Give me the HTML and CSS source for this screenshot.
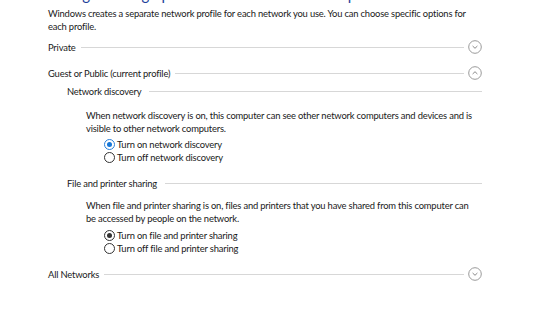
FILE: index.html
```html
<!DOCTYPE html>
<html lang="en">
<head>
    <meta charset="UTF-8">
    <title>Advanced sharing settings</title>
    <link rel="stylesheet" href="styles.css">
</head>
<body>
    <div class="page">
        <div class="page-title">Change sharing options for different network profiles</div>
        <p class="intro">Windows creates a separate network profile for each network you use. You can choose specific options for each profile.</p>

        <div class="profile-row row-private">
            <span class="profile-name">Private</span>
            <span class="rule"></span>
            <span class="expander down">
                <svg width="14" height="14" viewBox="0 0 14 14"><circle cx="7" cy="7" r="6.3" fill="none" stroke="#9a9a9a" stroke-width="1"/><path d="M4.6 6 L7 8.3 L9.4 6" fill="none" stroke="#8a8a8a" stroke-width="1"/></svg>
            </span>
        </div>

        <div class="profile-row row-guest">
            <span class="profile-name">Guest or Public (current profile)</span>
            <span class="rule"></span>
            <span class="expander up">
                <svg width="14" height="14" viewBox="0 0 14 14"><circle cx="7" cy="7" r="6.3" fill="none" stroke="#9a9a9a" stroke-width="1"/><path d="M4.6 8 L7 5.7 L9.4 8" fill="none" stroke="#8a8a8a" stroke-width="1"/></svg>
            </span>
        </div>

        <div class="section">
            <div class="section-head">
                <span>Network discovery</span>
                <span class="rule"></span>
            </div>
            <p class="section-text">When network discovery is on, this computer can see other network computers and devices and is visible to other network computers.</p>
            <div class="options">
                <label class="option"><span class="radio focused checked"></span>Turn on network discovery</label>
                <label class="option"><span class="radio"></span>Turn off network discovery</label>
            </div>
        </div>

        <div class="section section-sharing">
            <div class="section-head">
                <span>File and printer sharing</span>
                <span class="rule"></span>
            </div>
            <p class="section-text">When file and printer sharing is on, files and printers that you have shared from this computer can be accessed by people on the network.</p>
            <div class="options options-sharing">
                <label class="option"><span class="radio checked"></span>Turn on file and printer sharing</label>
                <label class="option"><span class="radio"></span>Turn off file and printer sharing</label>
            </div>
        </div>

        <div class="profile-row row-all">
            <span class="profile-name">All Networks</span>
            <span class="rule"></span>
            <span class="expander down">
                <svg width="14" height="14" viewBox="0 0 14 14"><circle cx="7" cy="7" r="6.3" fill="none" stroke="#9a9a9a" stroke-width="1"/><path d="M4.6 6 L7 8.3 L9.4 6" fill="none" stroke="#8a8a8a" stroke-width="1"/></svg>
            </span>
        </div>
    </div>
</body>
</html>
```

FILE: styles.css
```css
body {
    margin: 0;
    background-color: #fff;
    font-family: Lato, "Noto Sans", sans-serif;
    font-size: 9.4px;
    letter-spacing: -0.18px;
    line-height: 13px;
    color: #1a1a1a;
    overflow: hidden;
}
.page {
    width: 434px;
    padding-left: 48px;
}
.page-title {
    height: 17px;
    margin-top: -14px;
    font-size: 15px;
    line-height: 17px;
    letter-spacing: 0;
    color: #1e3f9a;
    white-space: nowrap;
}
.intro {
    margin: 4px 0 0 0;
    width: 420px;
}
.profile-row {
    display: flex;
    align-items: center;
    height: 14px;
}
.row-private {
    margin-top: 7px;
}
.row-guest {
    margin-top: 12px;
}
.row-all {
    margin-top: 12px;
}
.profile-name {
    white-space: nowrap;
}
.rule {
    flex: 1;
    height: 1px;
    margin-left: 5px;
    background-color: #d7d7d7;
}
.expander {
    display: flex;
    margin-left: 4px;
}
.section {
    padding-left: 19px;
}
.section-head {
    display: flex;
    align-items: center;
    margin-top: 5px;
    height: 13px;
}
.section-head .rule {
    margin-left: 8px;
}
.section-sharing .section-head {
    margin-top: 13px;
}
.section-text {
    margin: 11px 0 0 19px;
    width: 394px;
}
.section-sharing .section-text {
    margin-top: 9px;
}
.options {
    margin: 3px 0 0 37px;
}
.options-sharing {
    margin-top: 4px;
}
.option {
    display: flex;
    align-items: center;
    height: 13px;
}
.radio {
    box-sizing: border-box;
    width: 11px;
    height: 11px;
    margin-right: 2px;
    border: 1px solid #333;
    border-radius: 50%;
    position: relative;
}
.radio.checked::after {
    content: "";
    position: absolute;
    left: 2px;
    top: 2px;
    width: 5px;
    height: 5px;
    border-radius: 50%;
    background-color: #333;
}
.radio.focused {
    border-color: #2a7fd8;
}
.radio.focused::after {
    background-color: #1677d8;
}
```
